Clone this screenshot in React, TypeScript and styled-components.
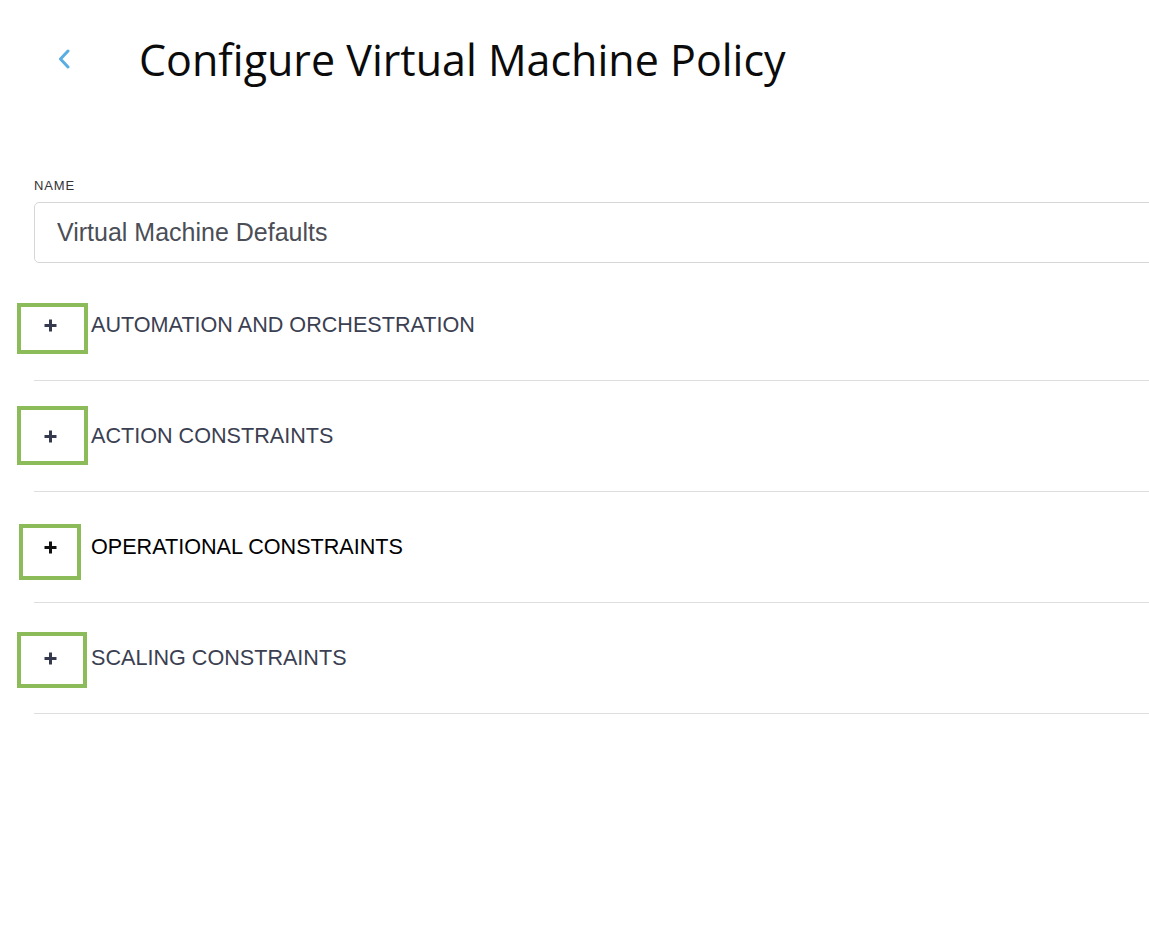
import styled, { createGlobalStyle } from "styled-components";

const GlobalStyle = createGlobalStyle`
  body {
    margin: 0;
    background: #ffffff;
    font-family: "Liberation Sans", Arial, sans-serif;
  }
`;

const Page = styled.div`
  padding: 0 0 0 34px;
  overflow: hidden;
`;

const Header = styled.header`
  display: flex;
  align-items: center;
  height: 118px;
`;

const BackButton = styled.button`
  display: flex;
  align-items: center;
  justify-content: center;
  width: 60px;
  height: 40px;
  padding: 0;
  border: none;
  background: transparent;
  cursor: pointer;
`;

const Title = styled.h1`
  margin: 0 0 0 45px;
  font-family: "Open Sans", sans-serif;
  font-weight: 400;
  font-size: 43px;
  color: #0b0b0b;
`;

const Field = styled.div`
  margin-top: 60px;
`;

const Label = styled.label`
  display: block;
  font-size: 13px;
  letter-spacing: 0.9px;
  color: #333;
  margin-bottom: 9px;
`;

const Input = styled.input`
  box-sizing: border-box;
  width: calc(100% + 20px);
  height: 61px;
  padding: 0 22px;
  border: 1px solid #d6d6d6;
  border-radius: 5px;
  font-family: "Liberation Sans", Arial, sans-serif;
  font-size: 25px;
  color: #4b4e56;
  outline: none;
`;

const Sections = styled.div`
  margin-top: 7px;
`;

const Row = styled.div`
  position: relative;
  display: flex;
  align-items: center;
  height: 110px;
  border-bottom: 1px solid #dedede;
`;

const Toggle = styled.button`
  display: flex;
  align-items: center;
  width: 57px;
  height: 40px;
  padding: 0 0 0 10px;
  border: none;
  background: transparent;
  cursor: pointer;
`;

const SectionTitle = styled.span<{ $strong?: boolean }>`
  font-size: 21.6px;
  color: ${(p) => (p.$strong ? "#000000" : "#3b3f52")};
`;

const Highlight = styled.div<{ $left: number; $top: number; $w: number; $h: number }>`
  position: absolute;
  left: ${(p) => p.$left}px;
  top: ${(p) => p.$top}px;
  width: ${(p) => p.$w}px;
  height: ${(p) => p.$h}px;
  box-sizing: border-box;
  border: 4px solid #8cbc5a;
  pointer-events: none;
`;

const Chevron = () => (
  <svg width="14" height="20" viewBox="0 0 14 20">
    <path d="M11 2 L3.5 10 L11 18" fill="none" stroke="#58ade3" strokeWidth="3" strokeLinecap="round" strokeLinejoin="round" />
  </svg>
);

const Plus = ({ color }: { color: string }) => (
  <svg width="13" height="13" viewBox="0 0 13 13">
    <path d="M6.5 0.5 V12.5 M0.5 6.5 H12.5" stroke={color} strokeWidth="3" />
  </svg>
);

const sections = [
  { title: "AUTOMATION AND ORCHESTRATION", box: { left: -17, top: 33, w: 71, h: 51 } },
  { title: "ACTION CONSTRAINTS", box: { left: -17, top: 25, w: 71, h: 59 } },
  { title: "OPERATIONAL CONSTRAINTS", box: { left: -15, top: 32, w: 62, h: 56 }, strong: true },
  { title: "SCALING CONSTRAINTS", box: { left: -17, top: 29, w: 70, h: 56 } },
];

function App() {
  return (
    <Page>
      <GlobalStyle />
      <Header>
        <BackButton aria-label="Back">
          <Chevron />
        </BackButton>
        <Title>Configure Virtual Machine Policy</Title>
      </Header>
      <Field>
        <Label>NAME</Label>
        <Input defaultValue="Virtual Machine Defaults" />
      </Field>
      <Sections>
        {sections.map((s) => (
          <Row key={s.title}>
            <Toggle aria-label="Expand">
              <Plus color={s.strong ? "#111111" : "#363a4e"} />
            </Toggle>
            <SectionTitle $strong={s.strong}>{s.title}</SectionTitle>
            <Highlight $left={s.box.left} $top={s.box.top} $w={s.box.w} $h={s.box.h} />
          </Row>
        ))}
      </Sections>
    </Page>
  );
}

export default App;
